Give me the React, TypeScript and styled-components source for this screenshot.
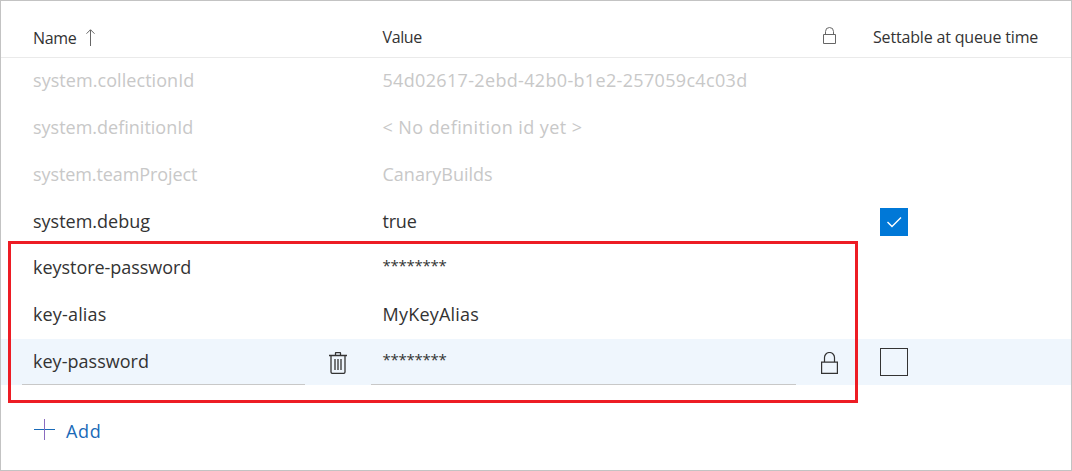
import React from "react";
import styled, { createGlobalStyle } from "styled-components";

const GlobalStyle = createGlobalStyle`
  *, *::before, *::after { box-sizing: border-box; }
  body {
    margin: 0;
    background: #fff;
    color: #333;
    font-family: "Open Sans", "Noto Sans", sans-serif;
    font-size: 18px;
  }
`;

const Panel = styled.main`
  position: relative;
  width: 1072px;
  height: 471px;
  border: 1px solid #c3c3c3;
  overflow: hidden;
`;

const Row = styled.div<{ $height?: number; $selected?: boolean }>`
  display: grid;
  grid-template-columns: 283px 66px 425px 66px 1fr;
  padding-left: 21px;
  height: ${(p) => p.$height ?? 47}px;
  background: ${(p) => (p.$selected ? "#eff6fd" : "transparent")};
`;

const HeaderRow = styled(Row)`
  height: 57px;
  padding-top: 18px;
  border-bottom: 1px solid #eaeaea;
  font-size: 16px;
`;

const Cell = styled.div<{ $underlined?: boolean }>`
  display: flex;
  align-items: center;
  padding: 0 0 ${(p) => (p.$underlined ? 1 : 3)}px 11px;
  border-bottom: ${(p) => (p.$underlined ? "1px solid #c8c8c8" : "none")};
`;

const ValueCell = styled(Cell)`
  padding-left: 11.5px;
`;

const SortCell = styled(Cell)`
  padding-bottom: 1px;
`;

const IconCell = styled.div<{ $top?: number }>`
  display: flex;
  justify-content: center;
  padding-top: ${(p) => p.$top ?? 0}px;
`;

const CheckCell = styled.div`
  padding: 9px 0 0 18px;
`;

const HeaderLabel = styled.span<{ $spacing: number }>`
  line-height: 24px;
  letter-spacing: ${(p) => p.$spacing}px;
  white-space: pre;
`;

const Label = styled.span<{ $spacing?: number; $muted?: boolean }>`
  line-height: 24px;
  color: ${(p) => (p.$muted ? "#c8c8c8" : "#333")};
  letter-spacing: ${(p) => p.$spacing ?? 0}px;
  white-space: pre;
`;

const Secret = styled(Label)`
  margin-bottom: 4px;
  font-size: 15px;
  letter-spacing: -0.26px;
`;

const SortArrow = styled.svg`
  margin: 0 0 1px 9px;
`;

const CheckBox = styled.div<{ $checked?: boolean }>`
  display: flex;
  width: 28px;
  height: 28px;
  border: 1px solid ${(p) => (p.$checked ? "#0078d7" : "#333")};
  background: ${(p) => (p.$checked ? "#0078d7" : "transparent")};
`;

const AddButton = styled.div`
  display: flex;
  align-items: center;
  padding: 34px 0 0 32px;
  gap: 11px;
  color: #1a6ab8;
`;

const AddIcon = styled.svg`
  margin-bottom: 2px;
`;

const AddLabel = styled.span`
  line-height: 24px;
  letter-spacing: 0.7px;
`;

const Highlight = styled.div`
  position: absolute;
  left: 7px;
  top: 240px;
  width: 850px;
  height: 162px;
  border: 3px solid #ed1c24;
`;

const SmallLock = () => (
  <svg width="14" height="18" viewBox="0 0 14 18" fill="none" stroke="#666">
    <path d="M1.5 7.5h12v9h-12zM3.5 7.5V4.5a4 4 0 0 1 8 0v3" />
  </svg>
);

const LargeLock = () => (
  <svg width="17" height="22" viewBox="0 0 17 22" fill="none" stroke="#333" strokeWidth="1.2">
    <path d="M.6 10.2h15.8v11.2H.6z" />
    <path d="M3.5 10V5.5a5 5 0 0 1 10 0V10" />
  </svg>
);

const Trash = () => (
  <svg width="18" height="22" viewBox="0 0 18 22" fill="none" stroke="#333" strokeWidth="1.3">
    <path d="M0 3.5h18M6.5 3V1.2q0-.7.7-.7h3.6q.7 0 .7.7V3M2 3.5V20q0 1.4 1.4 1.4h11.2Q16 21.4 16 20V3.5M6 7v11M9 7v11M12 7v11" />
  </svg>
);

type Variable = {
  name: string;
  value: string;
  nameSpacing?: number;
  valueSpacing?: number;
  height?: number;
  muted?: boolean;
  secret?: boolean;
  selected?: boolean;
  checked?: boolean;
};

const variables: Variable[] = [
  { name: "system.collectionId", value: "54d02617-2ebd-42b0-b1e2-257059c4c03d", nameSpacing: 0.06, valueSpacing: 0.33, muted: true },
  { name: "system.definitionId", value: "< No definition id yet >", nameSpacing: 0, valueSpacing: 0.43, muted: true },
  { name: "system.teamProject", value: "CanaryBuilds", nameSpacing: -0.09, muted: true },
  { name: "system.debug", value: "true", nameSpacing: 0, valueSpacing: -0.2, height: 46, checked: true },
  { name: "keystore-password", value: "********", nameSpacing: -0.04, secret: true },
  { name: "key-alias", value: "MyKeyAlias", nameSpacing: 0.15, valueSpacing: 0.22 },
  { name: "key-password", value: "********", nameSpacing: 0.03, height: 46, secret: true, selected: true, checked: false },
];

const VariableRow = ({ item }: { item: Variable }) => (
  <Row $height={item.height} $selected={item.selected}>
    <Cell $underlined={item.selected}>
      <Label $muted={item.muted} $spacing={item.nameSpacing}>{item.name}</Label>
    </Cell>
    <IconCell $top={13}>{item.selected && <Trash />}</IconCell>
    <ValueCell $underlined={item.selected}>
      {item.secret ? (
        <Secret>{item.value}</Secret>
      ) : (
        <Label $muted={item.muted} $spacing={item.valueSpacing}>{item.value}</Label>
      )}
    </ValueCell>
    <IconCell $top={13}>{item.selected && <LargeLock />}</IconCell>
    <CheckCell>
      {item.checked !== undefined && (
        <CheckBox $checked={item.checked}>
          {item.checked && (
            <svg width="26" height="26" viewBox="0 0 26 26" fill="none" stroke="#fff" strokeWidth="1.4">
              <path d="M6.5 13l4.5 4.5 9-9" />
            </svg>
          )}
        </CheckBox>
      )}
    </CheckCell>
  </Row>
);

export default function App() {
  return (
    <>
      <GlobalStyle />
      <Panel>
        <HeaderRow>
          <SortCell>
            <HeaderLabel $spacing={-0.3}>Name</HeaderLabel>
            <SortArrow width="9" height="17" viewBox="0 0 9 17" fill="none" stroke="#666">
              <path d="M4.5 17V1M.5 4.7l4-4 4 4" />
            </SortArrow>
          </SortCell>
          <span />
          <ValueCell>
            <HeaderLabel $spacing={-0.4}>Value</HeaderLabel>
          </ValueCell>
          <IconCell $top={8}>
            <SmallLock />
          </IconCell>
          <Cell>
            <HeaderLabel $spacing={-0.17}>Settable at queue time</HeaderLabel>
          </Cell>
        </HeaderRow>
        {variables.map((item) => (
          <VariableRow key={item.name} item={item} />
        ))}
        <AddButton>
          <AddIcon width="22" height="22" viewBox="0 0 22 22" fill="none">
            <path d="M1 10.5h21" stroke="#1a6ab8" />
            <path d="M11.5 0v21" stroke="#8a6bc0" />
          </AddIcon>
          <AddLabel>Add</AddLabel>
        </AddButton>
        <Highlight />
      </Panel>
    </>
  );
}
